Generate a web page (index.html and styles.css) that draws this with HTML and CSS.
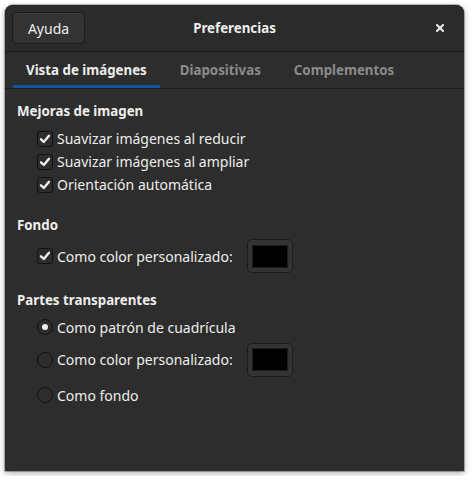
FILE: index.html
```html
<!DOCTYPE html>
<html lang="es">
<head>
<meta charset="utf-8">
<title>Preferencias</title>
<link rel="stylesheet" href="styles.css">
</head>
<body>
<div class="window">
  <header class="headerbar">
    <div class="hb-start"><button class="btn">Ayuda</button></div>
    <div class="title">Preferencias</div>
    <div class="hb-end">
      <div class="close">
        <svg width="8" height="8" viewBox="0 0 8 8"><path d="M1 1L7 7M7 1L1 7" stroke="#eeeeec" stroke-width="2" stroke-linecap="square"/></svg>
      </div>
    </div>
  </header>
  <nav class="tabs">
    <div class="tab active">Vista de imágenes</div>
    <div class="tab">Diapositivas</div>
    <div class="tab">Complementos</div>
  </nav>
  <main class="content">
    <section class="group">
      <h2 class="heading">Mejoras de imagen</h2>
      <div class="row"><span class="check"><svg viewBox="0 0 14 14"><path d="M3 7.3L5.8 10L11 3.8" fill="none" stroke="#eeeeec" stroke-width="2.4" stroke-linecap="round" stroke-linejoin="round"/></svg></span>Suavizar imágenes al reducir</div>
      <div class="row"><span class="check"><svg viewBox="0 0 14 14"><path d="M3 7.3L5.8 10L11 3.8" fill="none" stroke="#eeeeec" stroke-width="2.4" stroke-linecap="round" stroke-linejoin="round"/></svg></span>Suavizar imágenes al ampliar</div>
      <div class="row"><span class="check"><svg viewBox="0 0 14 14"><path d="M3 7.3L5.8 10L11 3.8" fill="none" stroke="#eeeeec" stroke-width="2.4" stroke-linecap="round" stroke-linejoin="round"/></svg></span>Orientación automática</div>
    </section>
    <section class="group">
      <h2 class="heading">Fondo</h2>
      <div class="row fondo"><span class="check"><svg viewBox="0 0 14 14"><path d="M3 7.3L5.8 10L11 3.8" fill="none" stroke="#eeeeec" stroke-width="2.4" stroke-linecap="round" stroke-linejoin="round"/></svg></span>Como color personalizado:<span class="colorbtn"><span class="swatch"></span></span></div>
    </section>
    <section class="group">
      <h2 class="heading">Partes transparentes</h2>
      <div class="row r1"><span class="radio on"></span>Como patrón de cuadrícula</div>
      <div class="row r2"><span class="radio"></span>Como color personalizado:<span class="colorbtn"><span class="swatch"></span></span></div>
      <div class="row r3"><span class="radio"></span>Como fondo</div>
    </section>
  </main>
</div>
</body>
</html>
```

FILE: styles.css
```css
* { box-sizing: border-box; }
html, body { margin: 0; padding: 0; background: #ffffff; }
body {
  padding: 5px;
  font-family: "Noto Sans", "Open Sans", sans-serif;
  font-size: 14px;
  color: #eeeeec;
}
.window {
  width: 459px;
  height: 466px;
  background: #2d2d2d;
  border-radius: 8px 8px 0 0;
  box-shadow: 0 2px 6px rgba(0,0,0,0.35), 0 0 0 1px rgba(0,0,0,0.25);
  display: flex;
  flex-direction: column;
  overflow: hidden;
}
.headerbar {
  height: 47px;
  flex: none;
  background: #2b2b2b;
  border-bottom: 1px solid #1b1b1b;
  display: grid;
  grid-template-columns: 1fr auto 1fr;
  align-items: center;
  padding: 0 7px;
}
.hb-start { display: flex; }
.hb-end { display: flex; justify-content: flex-end; }
.btn {
  width: 73px;
  height: 32px;
  background: #333333;
  border: 1px solid #1b1b1b;
  border-radius: 5px;
  color: #eeeeec;
  font-family: inherit;
  font-size: 14px;
  padding: 0;
  box-shadow: inset 0 1px rgba(255,255,255,0.04);
}
.title {
  text-align: center;
  font-weight: bold;
  font-size: 13.3px;
}
.close {
  width: 32px;
  height: 32px;
  display: flex;
  align-items: center;
  justify-content: center;
  margin-right: 1px;
}
.tabs {
  height: 37px;
  flex: none;
  display: flex;
  gap: 7px;
  padding-left: 8px;
  border-bottom: 1px solid #1e1e1e;
  background: #2d2d2d;
}
.tab {
  padding: 2px 13px 0 13px;
  display: flex;
  align-items: center;
  font-weight: bold;
  font-size: 13.3px;
  color: #8b8b8b;
  border-bottom: 3px solid transparent;
}
.tab.active {
  color: #eeeeec;
  border-bottom-color: #15539e;
}
.content {
  padding: 12px 12px 0 12px;
}
.group { margin-bottom: 19px; }
.heading {
  margin: 0 0 6px 0;
  font-size: 13.3px;
  font-weight: bold;
  line-height: 20px;
}
.row {
  display: flex;
  align-items: center;
  height: 23px;
  padding-left: 20px;
}
.row.fondo { height: 30px; }
.row.r1 { height: 22px; }
.row.r2 { height: 43px; }
.row.r3 { height: 28px; }
.check {
  width: 16px;
  height: 16px;
  border: 1px solid #121212;
  border-radius: 3px;
  background: #2d2d2d;
  margin-right: 4px;
  display: flex;
  align-items: center;
  justify-content: center;
  flex: none;
}
.check svg { width: 14px; height: 14px; }
.radio {
  width: 16px;
  height: 16px;
  border: 1px solid #121212;
  border-radius: 50%;
  margin-right: 4px;
  flex: none;
  display: flex;
  align-items: center;
  justify-content: center;
}
.radio.on::after {
  content: "";
  width: 6px;
  height: 6px;
  border-radius: 50%;
  background: #eeeeec;
}
.colorbtn {
  margin-left: 14px;
  width: 46px;
  height: 34px;
  flex: none;
  border: 1px solid #1b1b1b;
  border-radius: 5px;
  background: #333333;
  display: flex;
  align-items: center;
  justify-content: center;
}
.swatch {
  width: 36px;
  height: 23px;
  background: #000000;
  border: 1px solid #1b1b1b;
}
```
